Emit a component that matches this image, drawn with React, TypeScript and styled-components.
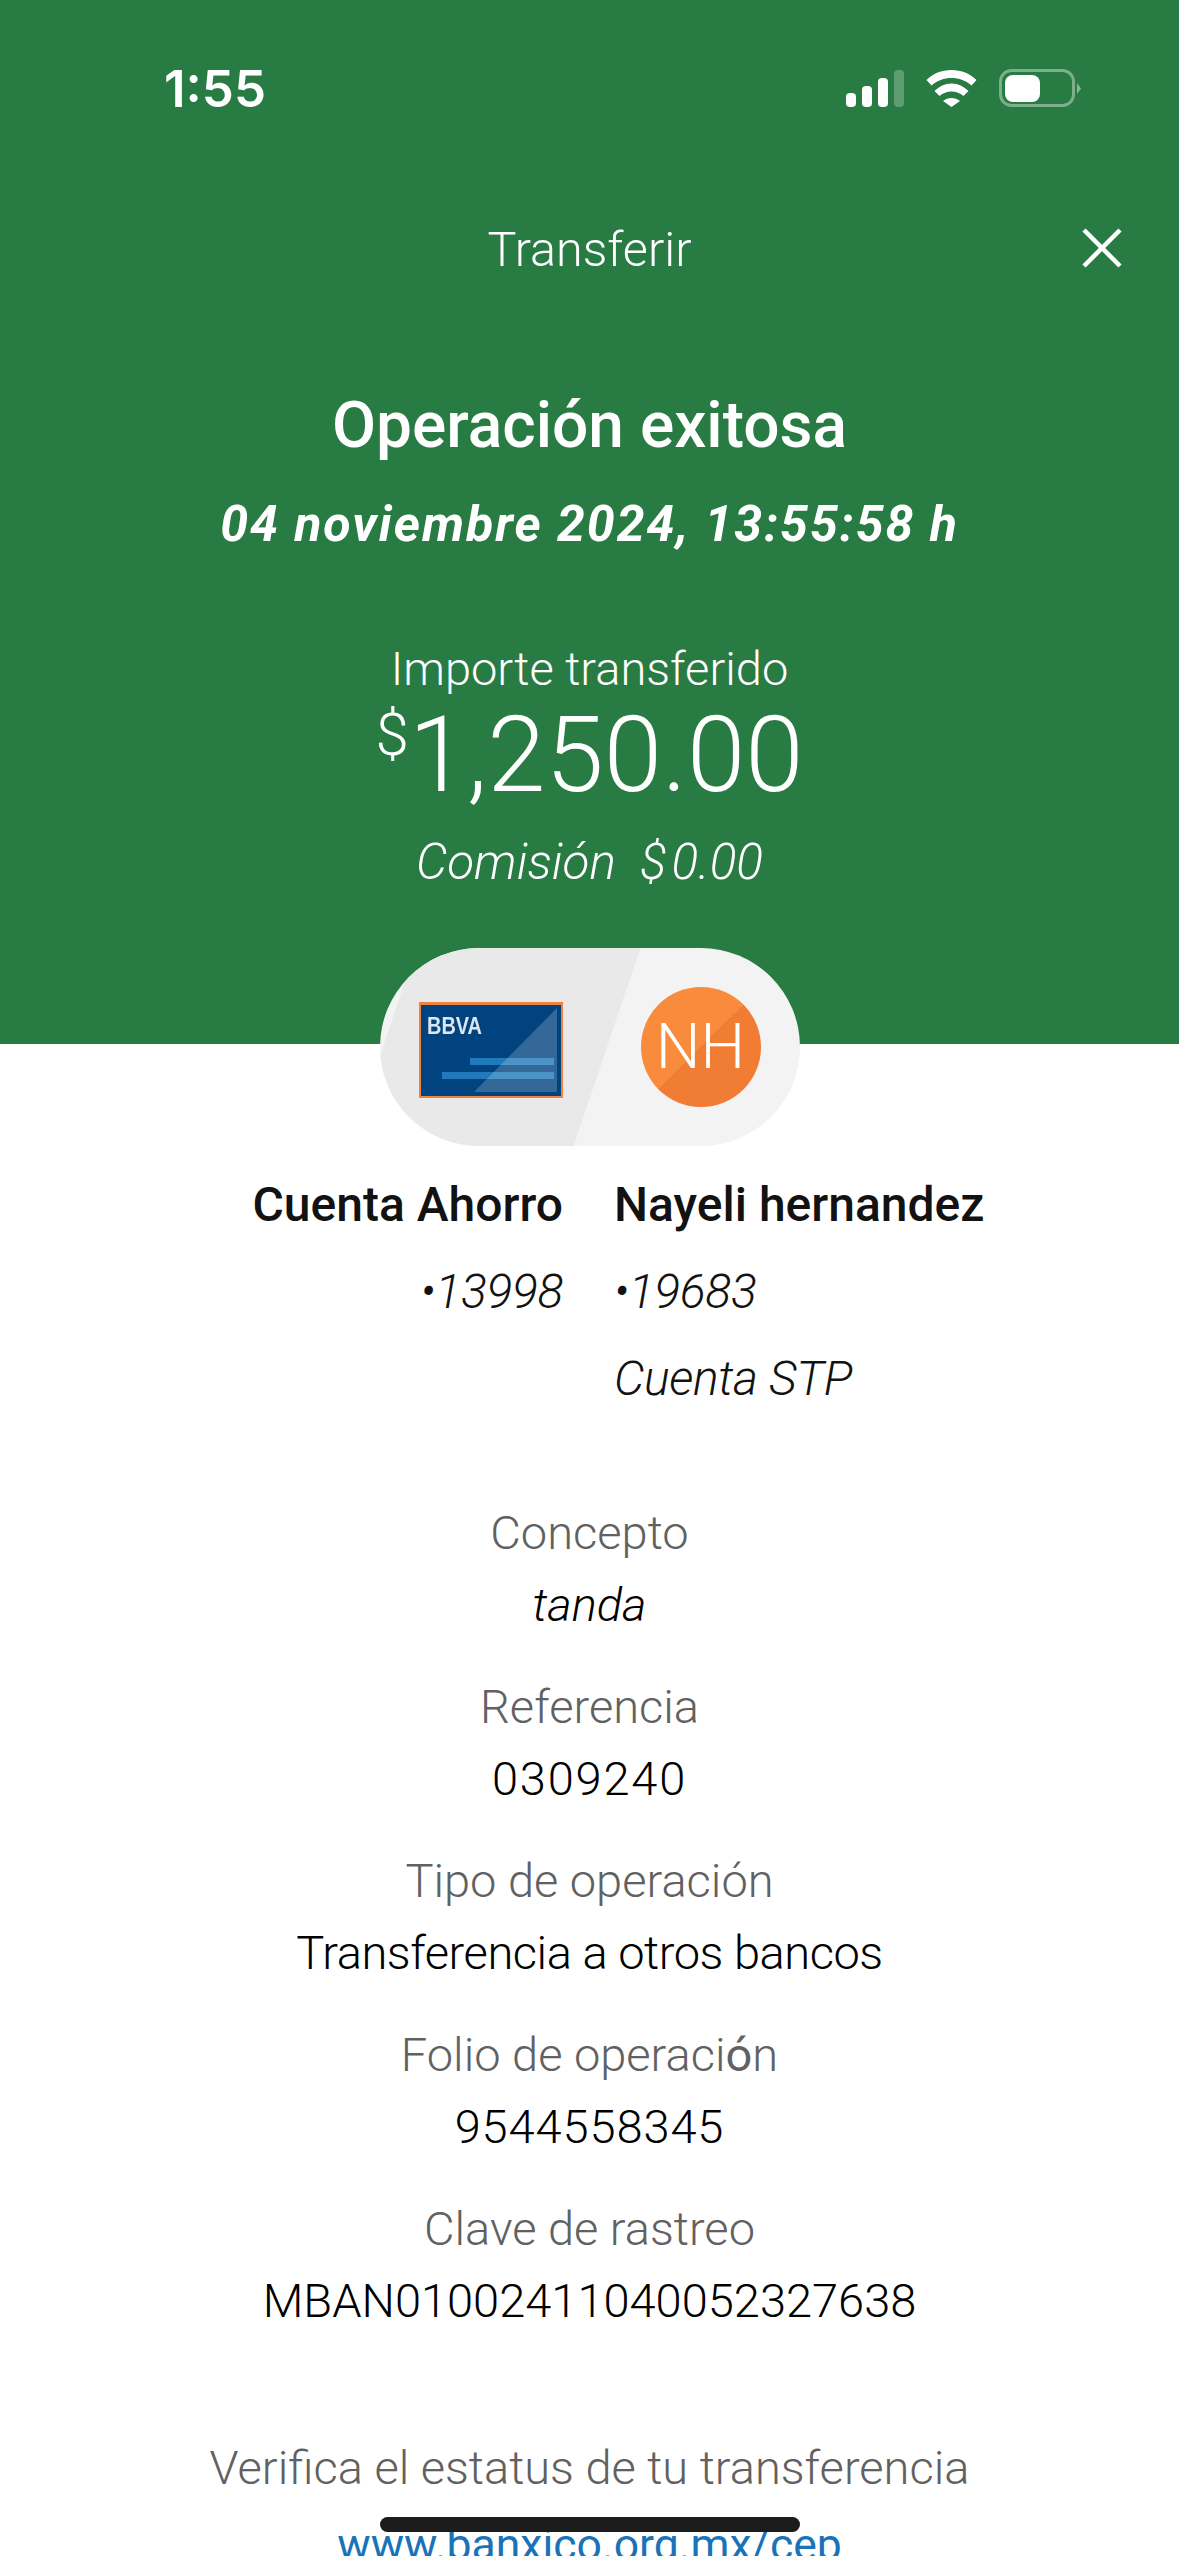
import styled, { createGlobalStyle } from "styled-components"

const GlobalStyle = createGlobalStyle`
  html, body {
    margin: 0;
    padding: 0;
    background: #fff;
  }
  body {
    font-family: "Roboto", "Open Sans", sans-serif;
  }
`

const Screen = styled.div`
  position: relative;
  width: 1179px;
  height: 2556px;
  overflow: hidden;
  background: #fff;
  text-align: center;
`
const Hero = styled.section`
  height: 1044px;
  background: #287b42;
  color: #fff;
`
const StatusBar = styled.div`
  height: 176px;
  display: flex;
  justify-content: space-between;
  align-items: center;
  padding: 0 97px 0 164px;
`
const Clock = styled.span`
  font-family: "Inter", sans-serif;
  font-size: 51px;
  font-weight: 600;
`
const Header = styled.header`
  height: 144px;
  display: grid;
  grid-template-columns: 1fr auto 1fr;
  align-items: center;
  padding: 0 57px;
`
const HeaderTitle = styled.h1`
  grid-column: 2;
  margin: 2px 0 0;
  font-size: 48.500px;
  font-weight: 300;
`
const CloseIcon = styled.svg`
  justify-self: end;
  display: block;
`
const Heading = styled.h2`
  margin: 70px 0 0;
  font-size: 64px;
  line-height: 72px;
  font-weight: 500;
`
const DateLine = styled.p`
  margin: 26px 0 0;
  font-size: 50px;
  line-height: 72px;
  font-weight: 700;
  font-style: italic;
  letter-spacing: 2px;
`
const AmountLabel = styled.p`
  margin: 79px 0 0;
  font-size: 47px;
  line-height: 60px;
  font-weight: 300;
`
const Amount = styled.p`
  margin: 2px 0 0;
  font-size: 105px;
  line-height: 110px;
  font-weight: 300;
`
const Currency = styled.sup`
  font-size: 60px;
  line-height: 0;
  vertical-align: 36px;
`
const Fee = styled.p`
  margin: 21px 0 0;
  font-size: 49.500px;
  line-height: 60px;
  font-weight: 300;
  font-style: italic;
  white-space: pre;
`
const Pill = styled.div`
  position: relative;
  width: 420px;
  height: 198px;
  margin: -96px auto 0;
  border-radius: 99px;
  overflow: hidden;
  background: #f3f3f3;
  display: flex;
  justify-content: space-between;
  align-items: center;
  padding: 0 39px;
  box-sizing: border-box;

  &::before {
    content: "";
    position: absolute;
    top: -20px;
    bottom: -20px;
    left: 3px;
    width: 224px;
    background: #e9e9e9;
    transform: skewX(-18.6deg);
  }
`
const CardArt = styled.svg`
  position: relative;
  display: block;
  margin-top: 6px;
`
const Avatar = styled.div`
  position: relative;
  width: 120px;
  height: 120px;
  border-radius: 50%;
  background: linear-gradient(135deg, #f98b3d 50%, #f07d33 50%);
  color: #fff;
  font-size: 63px;
  font-weight: 300;
  line-height: 120px;
`
const Parties = styled.div`
  display: grid;
  grid-template-columns: 563px 1fr;
  column-gap: 51px;
  margin-top: 15px;
  font-size: 48px;
  line-height: 87px;
  color: #121212;
`
const Party = styled.div<{ $align: string }>`
  text-align: ${(p) => p.$align};
`
const PartyName = styled.div`
  font-weight: 500;
`
const PartyMeta = styled.div`
  font-weight: 300;
  font-style: italic;
  letter-spacing: -0.300px;
`
const Details = styled.dl`
  margin: 75px 0 0;
  display: flex;
  flex-direction: column;
  gap: 30px;
  font-size: 47px;
  line-height: 72px;
`
const Label = styled.dt`
  font-weight: 300;
  color: #616161;
`
const Value = styled.dd<{ $italic?: boolean; $tracking?: number }>`
  margin: 0;
  font-weight: 300;
  font-style: ${(p) => (p.$italic ? "italic" : "normal")};
  letter-spacing: ${(p) => p.$tracking ?? 0}px;
  color: #000;
`
const DarkLetter = styled.span`
  font-weight: 400;
`
const VerifyText = styled.p`
  margin: 95px 0 0;
  font-size: 47px;
  line-height: 72px;
  font-weight: 300;
  color: #616161;
`
const VerifyLink = styled.a`
  display: block;
  margin-top: 5px;
  font-size: 44.500px;
  line-height: 72px;
  color: #1973b8;
`
const HomeIndicator = styled.div`
  position: absolute;
  left: 380px;
  bottom: 24px;
  width: 420px;
  height: 15px;
  border-radius: 8px;
  background: #1c1c1c;
`

const details = [
  { label: "Concepto", value: "tanda", italic: true },
  { label: "Referencia", value: "0309240", tracking: 1.8 },
  { label: "Tipo de operación", value: "Transferencia a otros bancos", tracking: -0.45 },
  { label: <>Folio de operaci<DarkLetter>ó</DarkLetter>n</>, value: "9544558345", tracking: 0.9 },
  { label: "Clave de rastreo", value: "MBAN01002411040052327638" },
]

function StatusIcons() {
  return (
    <svg width="236" height="39" viewBox="0 0 236 39" fill="none">
      <rect x="0" y="24" width="10" height="14" rx="4" fill="#fff" />
      <rect x="16" y="17" width="10" height="21" rx="4" fill="#fff" />
      <rect x="32" y="9" width="10" height="29" rx="4" fill="#fff" />
      <rect x="48" y="1" width="10" height="37" rx="4" fill="#fff" fillOpacity="0.25" />
      <g transform="translate(80 1)" fill="#fff">
        <path d="M0.500 10C7 3.500 15.500 0 25.500 0S44 3.500 50.500 10L45.500 15.500C40 10.500 33 8 25.500 8S11 10.500 5.500 15.500Z" />
        <path d="M8.500 21C13 16.500 19 13.500 25.500 13.500S38 16.500 42.500 21L37.500 26C34 23 30 21.500 25.500 21.500S17 23 13.500 26Z" />
        <path d="M17 31C19.500 29 22.500 28 25.500 28S31.500 29 34 31L25.500 37Z" />
      </g>
      <rect x="154.500" y="1.500" width="73" height="35" rx="11" stroke="#fff" strokeOpacity="0.4" strokeWidth="3" />
      <rect x="159" y="6" width="35" height="27" rx="8" fill="#fff" />
      <path d="M231 14L235 19.500L231 25Z" fill="#fff" fillOpacity="0.45" />
    </svg>
  )
}

function BankCard() {
  return (
    <CardArt width="144" height="96" viewBox="0 0 144 96">
      <defs>
        <filter id="soft">
          <feGaussianBlur stdDeviation="0.5" />
        </filter>
      </defs>
      <rect width="144" height="96" fill="#f0843f" />
      <rect x="2" y="3" width="140" height="91" fill="#00437f" />
      <text x="8" y="32" fontFamily="Liberation Sans" fontSize="24" fontWeight="700" textLength="55" lengthAdjust="spacingAndGlyphs" fill="#dde6f0" filter="url(#soft)">BBVA</text>
      <rect x="51" y="56" width="84" height="7" fill="#2079ba" />
      <rect x="23" y="70" width="112" height="7" fill="#2079ba" />
      <path d="M138 6V90H55Z" fill="#fff" fillOpacity="0.2" />
    </CardArt>
  )
}

function App() {
  return (
    <Screen>
      <GlobalStyle />
      <Hero>
        <StatusBar>
          <Clock>1:55</Clock>
          <StatusIcons />
        </StatusBar>
        <Header>
          <HeaderTitle>Transferir</HeaderTitle>
          <CloseIcon width="40" height="40" viewBox="0 0 40 40">
            <path d="M2 2L38 38M38 2L2 38" stroke="#fff" strokeWidth="4.500" />
          </CloseIcon>
        </Header>
        <Heading>Operación exitosa</Heading>
        <DateLine>04 noviembre 2024, 13:55:58 h</DateLine>
        <AmountLabel>Importe transferido</AmountLabel>
        <Amount><Currency>$</Currency>1,250.00</Amount>
        <Fee>Comisión  $&#8202;0.00</Fee>
      </Hero>
      <Pill>
        <BankCard />
        <Avatar>NH</Avatar>
      </Pill>
      <Parties>
        <Party $align="right">
          <PartyName>Cuenta Ahorro</PartyName>
          <PartyMeta>•13998</PartyMeta>
        </Party>
        <Party $align="left">
          <PartyName>Nayeli hernandez</PartyName>
          <PartyMeta>•19683</PartyMeta>
          <PartyMeta>Cuenta STP</PartyMeta>
        </Party>
      </Parties>
      <Details>
        {details.map((d, i) => (
          <div key={i}>
            <Label>{d.label}</Label>
            <Value $italic={d.italic} $tracking={d.tracking}>{d.value}</Value>
          </div>
        ))}
      </Details>
      <VerifyText>Verifica el estatus de tu transferencia</VerifyText>
      <VerifyLink>www.banxico.org.mx/cep</VerifyLink>
      <HomeIndicator />
    </Screen>
  )
}

export default App
